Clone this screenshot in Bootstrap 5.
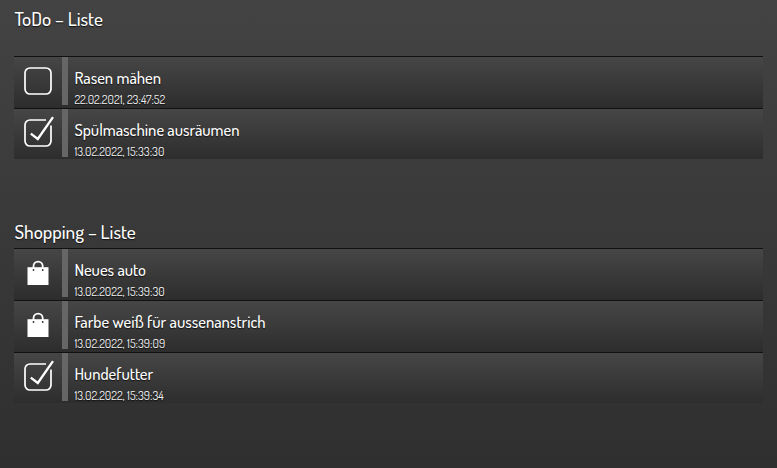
<!DOCTYPE html>
<html lang="de">
<head>
<meta charset="utf-8">
<meta name="viewport" content="width=device-width, initial-scale=1">
<title>Listen</title>
<link href="https://cdn.jsdelivr.net/npm/bootstrap@5.3.0/dist/css/bootstrap.min.css" rel="stylesheet">
<style>
html { height: 100%; }
body { height: 100vh; background: linear-gradient(#434343, #2f2f2f); color: #fff; font-family: Dosis, Lato, sans-serif; padding: 0 14px; text-shadow: 0 1px 1px #111; }
.list-title { font-size: 19.2px; line-height: 24px; height: 24px; margin: 0; font-weight: 500; padding-left: .4px; }
.first-title { margin-top: 7px; margin-bottom: 25px; }
.second-title { margin-top: 61px; margin-bottom: 4px; }
.entry { height: 52px; border-top: 1px solid #111; background: linear-gradient(#464646, #2d2d2d); }
.entry:last-child { height: 51px; }
.entry-icon { width: 48px; height: 48px; }
.entry-bar { width: 6px; height: 48px; background: #666; }
.entry-body { padding: 10px 0 0 6.4px; }
.entry-name { font-size: 16.5px; line-height: 22px; font-weight: 500; }
.entry-date { font-size: 12px; line-height: 14px; margin-top: 4px; font-weight: 400; color: #f4f4f4; }
</style>
<script src="https://cdn.jsdelivr.net/npm/bootstrap@5.3.0/dist/js/bootstrap.bundle.min.js"></script>
</head>
<body class="overflow-hidden">
<svg class="d-none">
  <symbol id="box" viewBox="0 0 48 48"><rect x="11" y="11" width="26" height="26" rx="5" fill="none" stroke="#fff" stroke-width="1.7"/></symbol>
  <symbol id="check" viewBox="0 0 48 48"><path d="M32 11H16a5 5 0 0 0-5 5v16a5 5 0 0 0 5 5h16a5 5 0 0 0 5-5V16.500" fill="none" stroke="#fff" stroke-width="1.7"/><path d="M16.800 24.600l7 5.400L39 8.200" fill="none" stroke="#fff" stroke-width="2.3"/></symbol>
  <symbol id="bag" viewBox="0 0 48 48"><path fill="#fff" d="M13.500 18.200h21V36h-21z"/><path d="M19.500 21v-3.800a4.600 4.600 0 0 1 9.200 0V21" fill="none" stroke="#fff" stroke-width="1.800"/><circle cx="19.500" cy="21" r=".9" fill="#333"/><circle cx="28.700" cy="21" r=".9" fill="#333"/></symbol>
</svg>
<main>
<h1 class="list-title first-title">ToDo – Liste</h1>
<section>
  <div class="entry d-flex"><svg class="entry-icon"><use href="#box"/></svg><div class="entry-bar"></div><div class="entry-body"><div class="entry-name">Rasen mähen</div><div class="entry-date">22.02.2021, 23:47:52</div></div></div>
  <div class="entry d-flex"><svg class="entry-icon"><use href="#check"/></svg><div class="entry-bar"></div><div class="entry-body"><div class="entry-name">Spülmaschine ausräumen</div><div class="entry-date">13.02.2022, 15:33:30</div></div></div>
</section>
<h2 class="list-title second-title">Shopping – Liste</h2>
<section>
  <div class="entry d-flex"><svg class="entry-icon"><use href="#bag"/></svg><div class="entry-bar"></div><div class="entry-body"><div class="entry-name">Neues auto</div><div class="entry-date">13.02.2022, 15:39:30</div></div></div>
  <div class="entry d-flex"><svg class="entry-icon"><use href="#bag"/></svg><div class="entry-bar"></div><div class="entry-body"><div class="entry-name">Farbe weiß für aussenanstrich</div><div class="entry-date">13.02.2022, 15:39:09</div></div></div>
  <div class="entry d-flex"><svg class="entry-icon"><use href="#check"/></svg><div class="entry-bar"></div><div class="entry-body"><div class="entry-name">Hundefutter</div><div class="entry-date">13.02.2022, 15:39:34</div></div></div>
</section>
</main>
</body>
</html>
